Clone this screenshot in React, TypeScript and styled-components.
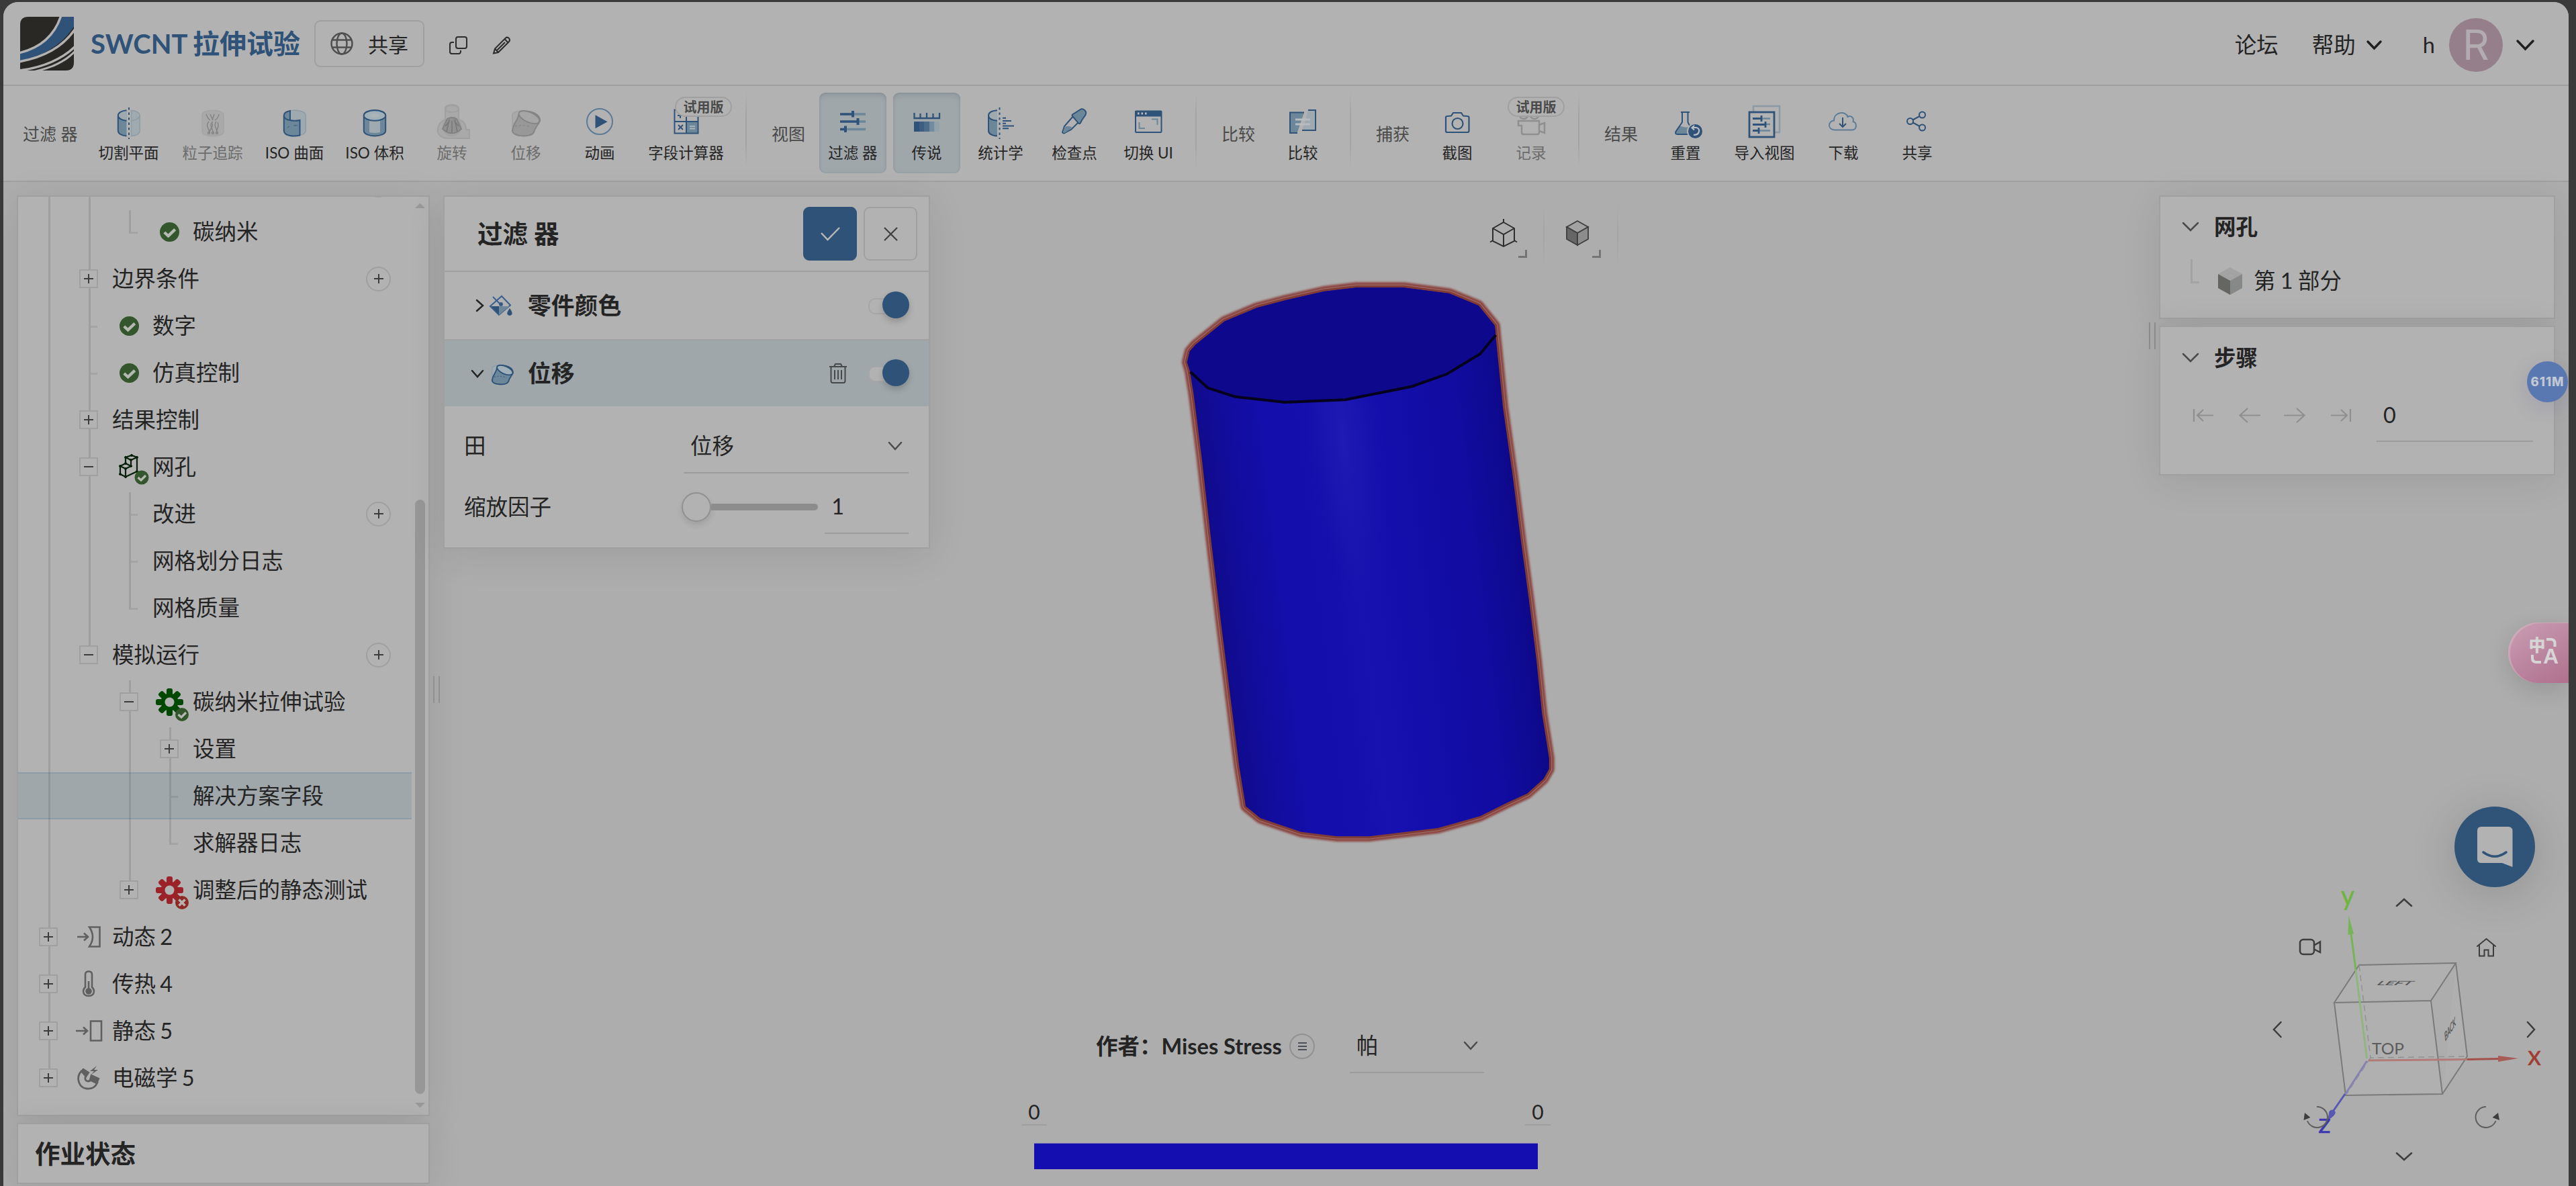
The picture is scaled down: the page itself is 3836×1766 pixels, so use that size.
import React from 'react';
import styled, { createGlobalStyle, css } from 'styled-components';

const c = {
  frame: '#3a3a3a',
  surface: '#b2b2b2',
  canvas: '#adadad',
  line: '#a0a0a0',
  text: '#242424',
  muted: '#4a4a4a',
  disabled: '#6c6c6c',
  blue: '#2f5278',
  mid: '#6c8799',
  light: '#9faab0',
  active: '#9fa7aa',
  green: '#34562c',
};

const Global = createGlobalStyle`
  * { box-sizing: border-box; }
  body {
    margin: 0;
    background: ${c.frame};
    color: ${c.text};
    font-family: Lato, "Noto Sans CJK SC", sans-serif;
    font-size: 32.5px;
    overflow: hidden;
  }
  svg { display: block; overflow: visible; flex: none; }
`;

const Window = styled.div`
  width: 3820px;
  height: 1763px;
  margin: 3px 0 0 5px;
  background: ${c.canvas};
  border-radius: 22px 22px 0 0;
  overflow: hidden;
  display: flex;
  flex-direction: column;
  position: relative;
`;

/* ---------- header ---------- */
const Header = styled.header`
  height: 125px;
  flex: none;
  display: flex;
  align-items: center;
  padding: 0 52px 0 25px;
  background: ${c.surface};
  border-bottom: 2px solid ${c.line};
`;
const Title = styled.h1`
  margin: 0 23px 0 25px;
  width: 310px;
  white-space: nowrap;
  font-size: 40px;
  line-height: 60px;
  font-weight: 700;
  word-spacing: -1px;
  color: ${c.blue};
`;
const ShareButton = styled.button`
  width: 164px;
  height: 70px;
  margin-top: 1px;
  padding: 0 0 0 22px;
  display: flex;
  align-items: center;
  gap: 22px;
  background: none;
  border: 2px solid ${c.line};
  border-radius: 9px;
  font: inherit;
  font-size: 30px;
  color: ${c.text};
`;
const HeaderIcons = styled.div`
  display: flex;
  gap: 38px;
  margin: 6px 0 0 37px;
`;
const UserNav = styled.nav`
  margin-left: auto;
  display: flex;
  align-items: center;
  line-height: 50px;
  padding-top: 4px;
`;
const NavText = styled.span<{ $gap: number }>`
  margin-right: ${p => p.$gap}px;
`;
const UserName = styled.span`
  margin-left: 62px;
`;
const Avatar = styled.div`
  width: 80px;
  height: 80px;
  margin: 0 21px;
  border-radius: 50%;
  background: #957f8b;
  color: #b2abaf;
  font: 62px/80px Inter, "Liberation Sans", sans-serif;
  text-align: center;
`;

/* ---------- toolbar ---------- */
const Toolbar = styled.div`
  height: 143px;
  flex: none;
  display: flex;
  padding-top: 10px;
  background: ${c.surface};
  border-bottom: 2px solid ${c.line};
`;
const Group = styled.section`
  display: flex;
  margin-right: 20px;
`;
const Tools = styled.div`
  display: flex;
  gap: 10px;
`;
const Separator = styled.div`
  width: 2px;
  height: 110px;
  background: linear-gradient(transparent, #a3a3a3 30%, #a3a3a3 70%, transparent);
`;
const GroupLabel = styled.div<{ $w: number; $pad: number }>`
  width: ${p => p.$w}px;
  padding-left: ${p => p.$pad}px;
  font-size: 25px;
  line-height: 123px;
  white-space: nowrap;
  color: ${c.muted};
`;
const ToolItem = styled.div<{ $w: number; $active?: boolean; $off?: boolean }>`
  width: ${p => p.$w}px;
  height: 120px;
  padding-top: 18px;
  display: flex;
  flex-direction: column;
  align-items: center;
  position: relative;
  border-radius: 9px;
  font-size: 22.5px;
  line-height: 44px;
  white-space: nowrap;
  color: ${p => (p.$off ? c.disabled : c.text)};
  ${p => p.$active && css`
    background: ${c.active};
    box-shadow: inset 0 6px 10px -3px rgba(0, 0, 0, 0.12), inset 0 0 0 2px rgba(140, 155, 163, 0.35);
  `}
`;
const Badge = styled.span<{ $x: number }>`
  position: absolute;
  left: ${p => p.$x}px;
  top: 6px;
  width: 85px;
  height: 30px;
  border: 2px solid ${c.line};
  border-radius: 15px;
  background: ${c.surface};
  color: ${c.muted};
  font-size: 20px;
  font-weight: 700;
  line-height: 26px;
  text-align: center;
`;

/* ---------- workspace ---------- */
const Workspace = styled.main`
  flex: 1;
  display: flex;
  position: relative;
  padding: 20px 20px 0 20px;
`;
const panel = css`
  background: ${c.surface};
  border: 2px solid ${c.line};
  box-shadow: 0 8px 55px rgba(0, 0, 0, 0.09);
`;
const SideColumn = styled.aside`
  width: 615px;
  display: flex;
  flex-direction: column;
  gap: 10px;
`;
const TreePanel = styled.div`
  ${panel}
  height: 1371px;
  display: flex;
  justify-content: space-between;
  overflow: hidden;
`;
const TreeList = styled.div`
  width: 586px;
`;
const Row = styled.div<{ $selected?: boolean; $clipped?: boolean }>`
  height: 70px;
  margin-top: ${p => (p.$clipped ? '-53px' : '0')};
  padding-left: 15px;
  display: flex;
  align-items: center;
  white-space: nowrap;
  ${p => p.$selected && css`
    background: ${c.active};
    box-shadow: inset 0 2px #8f9ca6, inset 0 -2px #8f9ca6;
  `}
`;
const Cell = styled.div`
  width: 60px;
  height: 70px;
  flex: none;
  position: relative;
  display: flex;
  align-items: center;
  justify-content: center;
`;
const Stem = styled.i<{ $from: number; $to: number }>`
  position: absolute;
  left: 30px;
  top: ${p => p.$from}px;
  width: 3px;
  height: ${p => p.$to - p.$from}px;
  background: rgba(0, 0, 0, 0.1);
`;
const Tick = styled.i`
  position: absolute;
  left: 33px;
  top: 35px;
  width: 10px;
  height: 3px;
  background: rgba(0, 0, 0, 0.08);
`;
const Expander = styled.span<{ $open?: boolean }>`
  width: 28px;
  height: 28px;
  position: relative;
  border: 2px solid ${c.line};
  background: ${c.surface};
  &::before, &::after {
    content: '';
    position: absolute;
    left: 5px;
    top: 11px;
    width: 14px;
    height: 2px;
    background: #3c3c3c;
  }
  &::after {
    display: ${p => (p.$open ? 'none' : 'block')};
    transform: rotate(90deg);
  }
`;
const RowText = styled.span`
  padding-left: 5px;
  line-height: 70px;
  word-spacing: -2px;
`;
const AddButton = styled.span`
  width: 37px;
  height: 37px;
  margin: 0 31px 0 auto;
  border: 2px solid ${c.line};
  border-radius: 50%;
  display: flex;
  align-items: center;
  justify-content: center;
`;
const ScrollTrack = styled.div`
  width: 15px;
  margin-right: 5px;
  padding: 10px 0;
  display: flex;
  flex-direction: column;
`;
const ScrollArrow = styled.i<{ $down?: boolean }>`
  border: 7.5px solid transparent;
  border-top-width: ${p => (p.$down ? 7 : 0)}px;
  border-bottom-width: ${p => (p.$down ? 0 : 7)}px;
  border-${p => (p.$down ? 'top' : 'bottom')}-color: #999;
`;
const ScrollThumb = styled.div`
  height: 885px;
  margin: 434px 0 13px;
  border-radius: 8px;
  background: #979797;
`;
const JobPanel = styled.div`
  ${panel}
  height: 91px;
  padding-left: 25px;
  font-size: 37.5px;
  font-weight: 700;
  line-height: 88px;
`;
const Handle = styled.div<{ $top: number }>`
  width: 10px;
  height: 40px;
  margin: ${p => p.$top}px 5px 0;
  border: solid #909090;
  border-width: 0 2px;
`;

/* ---------- filter panel ---------- */
const FilterPanel = styled.section`
  ${panel}
  width: 725px;
  height: 526px;
  display: flex;
  flex-direction: column;
`;
const FilterHeader = styled.div`
  height: 112px;
  display: flex;
  align-items: center;
  gap: 10px;
  padding: 0 17px 0 49px;
  border-bottom: 2px solid ${c.line};
`;
const FilterTitle = styled.h2`
  margin: 0 auto 0 0;
  font-size: 37.5px;
  line-height: 50px;
`;
const SquareButton = styled.button<{ $primary?: boolean }>`
  width: 80px;
  height: 80px;
  padding: 0;
  display: flex;
  align-items: center;
  justify-content: center;
  border-radius: 9px;
  border: 2px solid ${p => (p.$primary ? c.blue : c.line)};
  background: ${p => (p.$primary ? c.blue : 'none')};
`;
const FilterRow = styled.div<{ $active?: boolean }>`
  height: ${p => (p.$active ? 98 : 102)}px;
  display: flex;
  align-items: center;
  padding: 0 29px 0 ${p => (p.$active ? 40 : 47)}px;
  background: ${p => (p.$active ? c.active : 'none')};
  border-bottom: ${p => (p.$active ? 'none' : `2px solid ${c.line}`)};
`;
const FilterIcon = styled.span`
  width: 38px;
  margin-left: 9px;
`;
const FilterName = styled.h3`
  margin: -1px auto 0 19px;
  font-size: 34.8px;
  line-height: 50px;
`;
const Toggle = styled.div`
  width: 61px;
  height: 40px;
  margin: -2px 0 0 32px;
  display: flex;
  align-items: center;
  justify-content: flex-end;
  position: relative;
  &::before {
    content: '';
    position: absolute;
    left: 0;
    top: 10px;
    width: 50px;
    height: 20px;
    border-radius: 10px;
    border: 2px solid #a6a6a6;
    background: ${c.surface};
  }
  &::after {
    content: '';
    position: relative;
    width: 40px;
    height: 40px;
    border-radius: 50%;
    background: ${c.blue};
    box-shadow: 0 5px 10px rgba(0, 0, 0, 0.18);
  }
`;
const Field = styled.label<{ $h: number }>`
  height: ${p => p.$h}px;
  display: flex;
  align-items: center;
  padding: 0 30px 0 29px;
  line-height: 50px;
`;
const FieldName = styled.span`
  width: 327px;
  margin-top: -1px;
`;
const Underlined = styled.span<{ $w: number; $h: number }>`
  width: ${p => p.$w}px;
  height: ${p => p.$h}px;
  padding: 0 10px;
  display: flex;
  align-items: center;
  justify-content: space-between;
  border-bottom: 2px solid #9c9c9c;
`;
const Slider = styled.span`
  width: 203px;
  height: 40px;
  margin: -1px 10px 0 -2px;
  display: flex;
  align-items: center;
  &::before {
    content: '';
    width: 40px;
    height: 40px;
    border-radius: 50%;
    border: 2px solid #909090;
    box-shadow: 0 5px 8px rgba(0, 0, 0, 0.1);
  }
  &::after {
    content: '';
    flex: 1;
    height: 10px;
    border-radius: 0 5px 5px 0;
    background: #8d8d8d;
  }
`;

/* ---------- viewport ---------- */
const Scene = styled.svg`
  position: absolute;
  left: 1695px;
  top: 29px;
`;
const Viewport = styled.section`
  flex: 1;
  position: relative;
  display: flex;
  flex-direction: column;
`;
const ViewTools = styled.div`
  margin: 14px 0 0 805px;
  display: flex;
`;
const ViewTool = styled.div`
  width: 110px;
  height: 90px;
  display: flex;
  align-items: center;
  justify-content: center;
  position: relative;
  padding: 0 11px 6px 0;
  border-right: 2px solid transparent;
  border-image: linear-gradient(transparent, #a3a3a3 50%, transparent) 1;
  &::after {
    content: '';
    position: absolute;
    right: 24px;
    bottom: 11px;
    width: 10px;
    height: 9px;
    border: solid #757575;
    border-width: 0 3px 3px 0;
  }
`;
const Legend = styled.div`
  width: 750px;
  margin: auto 0 25px 155px;
`;
const LegendHead = styled.div`
  display: flex;
  align-items: center;
  height: 80px;
  padding-left: 92px;
  line-height: 48px;
`;
const LegendName = styled.strong`
  width: 288px;
  margin-top: -1px;
  white-space: nowrap;
`;
const MenuDot = styled.span`
  width: 38px;
  height: 38px;
  margin: -1px 52px 0 0;
  border: 2px solid #919191;
  border-radius: 50%;
  display: flex;
  flex-direction: column;
  align-items: center;
  justify-content: center;
  gap: 3px;
  & i {
    width: 13px;
    height: 2px;
    background: #4b5058;
  }
`;
const Range = styled.div`
  height: 104px;
  display: flex;
  justify-content: space-between;
  align-items: flex-start;
  padding-top: 37px;
  margin: 0 -19px;
`;
const Bound = styled.span`
  width: 38px;
  height: 41px;
  border-bottom: 2px solid #9f9f9f;
  font-size: 30px;
  line-height: 41px;
  text-align: center;
`;
const ColorBar = styled.div`
  height: 39px;
  background: #140eb0;
  border-top: 1px solid #6a67ae;
`;

/* ---------- right side ---------- */
const RightColumn = styled.aside`
  width: 590px;
  display: flex;
  flex-direction: column;
  gap: 10px;
`;
const InfoPanel = styled.section<{ $h: number }>`
  ${panel}
  height: ${p => p.$h}px;
  padding-left: 33px;
`;
const InfoTitle = styled.h4<{ $h: number }>`
  height: ${p => p.$h}px;
  margin: 0;
  display: flex;
  align-items: center;
  gap: 23px;
  font-size: 32.5px;
  line-height: 48px;
`;
const PartRow = styled.div`
  display: flex;
  align-items: center;
  height: 72px;
  line-height: 50px;
`;
const PartElbow = styled.i`
  width: 13px;
  height: 36px;
  margin: -28px 28px 0 12px;
  border: solid #a3a3a3;
  border-width: 0 0 3px 3px;
`;
const PartName = styled.span`
  margin-left: 17px;
  word-spacing: -1px;
`;
const Steps = styled.div`
  display: flex;
  align-items: center;
  padding-left: 16px;
  height: 80px;
`;
const StepArrows = styled.div`
  display: flex;
  gap: 37px;
  margin-right: 38px;
`;

const Orientation = styled.svg`
  position: absolute;
  left: 3335px;
  top: 909px;
  font-family: Lato, sans-serif;
`;
const Chat = styled.div`
  position: absolute;
  left: 3650px;
  top: 930px;
  width: 120px;
  height: 120px;
  border-radius: 50%;
  background: #305478;
  box-shadow: 0 10px 70px rgba(0, 0, 0, 0.16);
`;
const Memory = styled.div`
  position: absolute;
  left: 3758px;
  top: 267px;
  width: 61px;
  height: 61px;
  border-radius: 50%;
  background: #5977b0;
  color: #c2c8d4;
  box-shadow: 0 8px 30px rgba(90, 90, 150, 0.2);
  font: 800 18.5px/61px Inter, sans-serif;
  letter-spacing: 1px;
  text-align: center;
`;
const Translate = styled.div`
  position: absolute;
  right: 0;
  top: 656px;
  width: 90px;
  height: 90px;
  border-radius: 45px 0 0 45px;
  padding: 21px 0 0 32px;
  background: linear-gradient(150deg, #c99fb3, #b0708e);
  box-shadow: inset 3px 1px 1px rgba(215, 190, 200, 0.5), 0 10px 35px rgba(0, 0, 0, 0.13);
`;

/* ---------- icons ---------- */
const B = c.blue;
const M = c.mid;
const L = c.light;

const Icon = ({ size = 50, children }: { size?: number; children: React.ReactNode }) => (
  <svg width={size} height={size} viewBox="0 0 50 50" fill="none" stroke={B} strokeWidth="2">
    {children}
  </svg>
);

const toolIcons: Record<string, React.ReactNode> = {
  cut: (
    <>
      <path d="M21.500 8.300C14 9 8.800 12 8.800 16V38.500C8.800 43 14 46 21.500 46.500Z" fill={M} stroke="none" />
      <path d="M21.500 8.300C5 9.500 4 21 21.500 23.800Z" fill={L} stroke="none" />
      <path d="M21.500 8.300C14 9 8.800 12 8.800 16V38.500C8.800 43 14 46 21.500 46.500M8.800 16C8.800 20 14 23 21.500 23.800" />
      <path d="M28.500 8.300C36 9 41.200 12 41.200 16V38.500C41.200 43 36 46 28.500 46.500ZM41.200 16C41.200 20 36 23 28.500 23.800" fill={L} stroke="#8d9ba5" strokeWidth="1.500" />
      <path d="M25 4V51" strokeDasharray="3.500 4" />
    </>
  ),
  particle: (
    <g stroke="#858585" strokeWidth="1.500">
      <path d="M9 15C9 6 41 6 41 15V40C41 49 9 49 9 40Z" fill="#a9a9a9" stroke="#a4a4a4" />
      <path d="M15 14Q17 20 21 23M21 14L25 23M27 14L24 23M34 14Q33 20 28 23M19 25C13 32 20 35 20 42M25 25C18 32 26 35 25 42M30 25C25 32 32 35 31 42M23 26C28 33 19 36 20 42M32 26C36 33 29 36 31 42" />
      <circle cx="19" cy="42" r="1.500" /><circle cx="25" cy="42" r="1.500" /><circle cx="31" cy="42" r="1.500" />
    </g>
  ),
  isoSurface: (
    <>
      <path d="M8.800 16C8.800 5.500 41.200 5.500 41.200 16V38.500C41.200 49 8.800 49 8.800 38.500Z" fill={L} stroke="#8d9ba5" strokeWidth="1.500" />
      <path d="M18 9C12 10 8.800 13 8.800 16V38.500C8.800 46 22 48 32.500 45.500V23C28 24 22 24 18 23Z" fill={M} />
      <path d="M8.800 16C8.800 20 13 22.500 18 23" />
      <path d="M14 34L17 32M23 31H29" stroke={B} strokeWidth="1.500" opacity=".5" />
    </>
  ),
  isoVolume: (
    <>
      <path d="M8.800 16C8.800 5.500 41.200 5.500 41.200 16V38.500C41.200 49 8.800 49 8.800 38.500Z" fill={M} />
      <path d="M17 20H33V41Q25 43 17 41Z" fill={L} stroke="none" />
      <ellipse cx="25" cy="16" rx="16.200" ry="7.800" fill="#a0b0b9" />
      <ellipse cx="25" cy="16" rx="7.500" ry="3" fill="#aab4b9" stroke="none" />
    </>
  ),
  turbine: (
    <g stroke="#a0a0a0" strokeWidth="2">
      <path d="M15 6V22C0 28-2 50 20 50H51V37H46C46 28 42 24 35 22V6C35-2 15-2 15 6Z" fill="#a9a9a9" />
      <ellipse cx="25" cy="6" rx="10" ry="5" />
      <circle cx="25" cy="33" r="13" />
      <path d="M18 21L11 36Q25 49 39 36L32 21Q25 17 18 21Z" fill="#929292" stroke="#838383" />
      <path d="M21 22L17 40M25 24V42M29 22L33 40M15 32L21 25M35 32L29 25" stroke="#777" strokeWidth="1.500" />
    </g>
  ),
  shiftOff: (
    <>
      <path d="M5 15C5 7 37 7 37 15V32H5Z" fill="#a9a9a9" stroke="#a3a3a3" />
      <path d="M14 16C16 5 47 9 46 24C43 31 39 33 37 41C33 49 6 48 5 39C6 27 13 24 14 16Z" fill="#989898" stroke="#858585" />
      <ellipse cx="30" cy="18.500" rx="16.500" ry="7.500" transform="rotate(24 30 18.500)" fill="#a6a6a6" stroke="#858585" />
      <path d="M9 32Q20 29 33 33" stroke="#888" strokeWidth="1.500" strokeDasharray="3 3" />
    </>
  ),
  shift: (
    <>
      <path d="M5 15C5 7 37 7 37 15V32H5Z" fill="#9fadb4" stroke="#8fa0ab" />
      <path d="M14 16C16 5 47 9 46 24C43 31 39 33 37 41C33 49 6 48 5 39C6 27 13 24 14 16Z" fill={M} strokeWidth="2.500" />
      <ellipse cx="30" cy="18.500" rx="16.500" ry="7.500" transform="rotate(24 30 18.500)" fill="#9fb0ba" strokeWidth="2.500" />
      <path d="M9 32Q20 29 33 33" strokeWidth="1.500" strokeDasharray="3 3" opacity=".6" />
    </>
  ),
  play: (
    <>
      <circle cx="25" cy="25" r="19" stroke="#5c7b97" />
      <path d="M19.500 17V33.500L34.500 25.200Z" fill={B} />
    </>
  ),
  calc: (
    <>
      <path d="M25 25H42.500V42.500H25Z" fill={M} stroke="none" />
      <path d="M7.500 7.500H42.500V42.500H7.500ZM25 8V42.500M8 25H42.500M16 12V20M12 16H20M13 30L20 37M20 30L13 37" />
      <path d="M30 32H38M30 35.500H38" stroke="#a8b3ba" />
    </>
  ),
  filters: (
    <>
      <path d="M25 14H44M32 25H44M14 36.500H44" stroke={M} strokeWidth="3.500" />
      <path d="M6 14H25M6 25H32M6 36.500H14" strokeWidth="3.500" />
      <path d="M25 9V18.500M32.500 20V30M14 31.500V41" strokeWidth="4" />
    </>
  ),
  legend: (
    <>
      <path d="M6.500 12V20H44V12M15.500 13V20M25 12V20M34.500 13V20" strokeWidth="2.300" />
      <g stroke="none">
        <rect x="6" y="25" width="8" height="15" fill="#2f5278" />
        <rect x="14" y="25" width="7" height="15" fill="#3d5e80" />
        <rect x="21" y="25" width="8" height="15" fill="#4e6c8a" />
        <rect x="29" y="25" width="7.500" height="15" fill="#718c9e" />
        <rect x="36.500" y="25" width="7.500" height="15" fill="#93a2aa" />
      </g>
    </>
  ),
  stats: (
    <>
      <path d="M20 8.300C12 9 7 12 7 16V38.500C7 43 12 46 20 46.500Z" fill={M} stroke="none" />
      <path d="M20 8.300C4 9.500 3 21 20 23.800Z" fill={L} stroke="none" />
      <path d="M20 8.300C12 9 7 12 7 16V38.500C7 43 12 46 20 46.500M7 16C7 20 12 23 20 23.800" />
      <path d="M23.500 4V51" strokeDasharray="3.500 4" />
      <path d="M28 19.700H33M28 24H41M28 27.700H33M28 31.500H45M28 35.200H37" stroke={B} />
    </>
  ),
  dropper: (
    <>
      <path d="M24 16L10 32L7 41Q9 44 12 41L20 37L33 24" />
      <path d="M11 33Q16 30 22 34L12 41Q9 43 8 40Z" fill={M} stroke="none" />
      <path d="M23 14L26 12L33 7.500C38 4 44 10 41.500 15L36 23L34 27Q32 30 29 25L23 18Q20 15 23 14Z" fill={M} />
    </>
  ),
  layout: (
    <>
      <rect x="6" y="9.500" width="38.500" height="31.500" rx="1" />
      <path d="M6 10H44V16.500H6Z" fill={B} />
      <path d="M9 13H11.500M14.500 13H17M20 13H22.500" stroke="#bbb" strokeWidth="3" />
      <path d="M30 21.500H38.500V30M11.500 26V35H20" stroke={M} />
    </>
  ),
  compare: (
    <>
      <path d="M27 11.500H6V42H16.500Z" fill={M} stroke="none" />
      <path d="M27 11.500H6V42H17" />
      <path d="M33 8H44V38H24Z" fill={L} stroke="none" />
      <path d="M33 8H44V38H24" />
      <path d="M31 7L19 43" stroke={c.surface} strokeWidth="3" />
      <path d="M14 22H36M14 29H36" stroke="#b7bcbf" strokeWidth="3" />
    </>
  ),
  camera: (
    <>
      <path d="M8 19Q8 17 10 17L16 16.500L19 12H31L34 16.500L40 17Q42.500 17 42.500 19V39Q42.500 41 40 41H10Q8 41 8 39Z" strokeWidth="2.200" />
      <circle cx="25.500" cy="28" r="8" strokeWidth="2.200" />
    </>
  ),
  record: (
    <g stroke="#8f8f8f" strokeWidth="2.500">
      <circle cx="14" cy="14" r="7" /><circle cx="30" cy="14" r="7" />
      <path d="M6 24H37V41Q37 44 34 44H14Q11 44 11 41V31H6ZM37 30L45 27V42L37 39" />
    </g>
  ),
  reset: (
    <>
      <path d="M14 33Q18 31 22 33Q27 35 32 32L36 40Q38 44 33 44H13Q8 44 10 39Z" fill={M} stroke="none" />
      <path d="M18 11H31M20 11V26L10.500 40Q9 44 13 44H34Q37 43 35.500 40L28.500 26V11" />
      <circle cx="39.500" cy="39.500" r="11.500" fill={B} stroke={c.surface} strokeWidth="2" />
      <path d="M35 34H41Q46 35 45 40Q44 45 37 45M38 31L34.500 34.200L38 37.500" stroke="#bbc0c5" strokeWidth="2.200" />
    </>
  ),
  importView: (
    <>
      <path d="M8 10V2H47V41H40" stroke="#8a9ba6" strokeWidth="2.500" />
      <rect x="2" y="11" width="37" height="37" strokeWidth="2.800" />
      <path d="M20 20.500H33M26 29H33M16 38.500H33" stroke={M} strokeWidth="2.500" />
      <path d="M7 20.500H20M7 29.500H26M7 38.500H16M20 16V25M26 25V34M16 34V43" strokeWidth="2.800" />
    </>
  ),
  download: (
    <>
      <path d="M12 37.500C1 37 2 24 11 23.500C11 10 29 9 31.500 18C37 15 41 20 39.500 25C46 27 45 37.500 38 37.500Z" stroke="#5c7b97" />
      <path d="M24 19V33M19 28L24 33L29 28" />
    </>
  ),
  share: (
    <>
      <circle cx="14.500" cy="24.500" r="4.500" /><circle cx="32.500" cy="15" r="4.500" /><circle cx="32.500" cy="34" r="4.500" />
      <path d="M18.500 22.500L28.500 17M18.500 26.500L28.500 32" />
    </>
  ),
};

const Chevron = ({ w, h, dir = 'down', color = '#4a4a4a', stroke = 3 }: { w: number; h: number; dir?: string; color?: string; stroke?: number }) => {
  const d: Record<string, string> = {
    down: `M1 1L${w / 2} ${h - 1}L${w - 1} 1`,
    right: `M1 1L${w - 1} ${h / 2}L1 ${h - 1}`,
  };
  return (
    <svg width={w} height={h} fill="none" stroke={color} strokeWidth={stroke} strokeLinecap="round">
      <path d={d[dir]} />
    </svg>
  );
};

const Logo = () => (
  <svg width="80" height="80" viewBox="0 0 80 80">
    <defs><clipPath id="logo"><path d="M12 0H80V68Q80 80 68 80H0V12Q0 0 12 0Z" /></clipPath></defs>
    <g clipPath="url(#logo)">
      <rect width="80" height="80" fill="#2a2824" />
      <path d="M62 -2C54 26 34 46 -2 55V66C44 56 68 36 84 8V-2Z" fill={B} />
      <g fill="none" stroke={c.surface} strokeWidth="3.500">
        <path d="M61 -2C52 26 32 46 -2 54" />
        <path d="M-2 67C38 60 66 42 82 18" />
        <path d="M-2 80C34 76 64 62 82 44" />
      </g>
      <path d="M16 81C44 76 66 66 82 49V53C66 70 44 78 24 82Z" fill={c.surface} />
    </g>
  </svg>
);

const CheckDisc = ({ size = 29 }: { size?: number }) => (
  <svg width={size} height={size} viewBox="0 0 30 30">
    <circle cx="15" cy="15" r="15" fill={c.green} />
    <path d="M7 15.500L13 21L23.500 11" fill="none" stroke="#b4b9b2" strokeWidth="4.500" />
  </svg>
);

const Gear = ({ color, failed }: { color: string; failed?: boolean }) => (
  <svg width="41" height="41" viewBox="0 0 41 41">
    {[0, 45, 90, 135].map(a => (
      <rect key={a} x="16" y="0" width="9" height="41" rx="3" fill={color} transform={`rotate(${a} 20.5 20.5)`} />
    ))}
    <circle cx="20.500" cy="20.500" r="13" fill={color} />
    <circle cx="20.500" cy="20.500" r="7" fill={c.surface} />
    <circle cx="39" cy="39" r="10" fill={failed ? '#8d2a25' : c.green} />
    {failed
      ? <path d="M34.500 34.500L43.500 43.500M43.500 34.500L34.500 43.500" stroke="#b8b2b0" strokeWidth="3.500" />
      : <path d="M33.500 39L38 43L45 36" fill="none" stroke="#b4b9b2" strokeWidth="3.200" />}
  </svg>
);

const treeIcons: Record<string, React.ReactNode> = {
  check: <CheckDisc />,
  mesh: (
    <svg width="30" height="36" viewBox="0 0 30 36" fill="none" stroke="#08200a" strokeWidth="2.200">
      <path d="M2 17L10 13L18 17L10 21ZM2 17V29L10 33V21M10 33L27 25V4L19 1L10 4V13M10 4L18 8L27 4M18 8V17" />
      <g fill="#08200a" strokeWidth="1">
        {[[2, 17], [10, 13], [18, 17], [10, 21], [2, 29], [10, 33], [27, 25], [27, 4], [19, 1], [10, 4], [18, 8]].map(([x, y]) => (
          <circle key={`${x}-${y}`} cx={x} cy={y} r="1.500" />
        ))}
      </g>
      <circle cx="34" cy="34" r="10.500" fill={c.green} stroke="none" />
      <path d="M28.500 34L33 38L40 31" stroke="#b4b9b2" strokeWidth="3.200" />
    </svg>
  ),
  gearOk: <Gear color="#014801" />,
  gearFail: <Gear color="#9b2228" failed />,
  dynamic: (
    <svg width="34" height="32" viewBox="0 0 34 32" fill="none" stroke="#606060" strokeWidth="2.600">
      <path d="M0 16H15M10 10.500L16 16L10 21.500M18 1.500H33.500V30.500H18Q28 16 18 1.500Z" />
    </svg>
  ),
  thermal: (
    <svg width="18" height="40" viewBox="0 0 18 40" fill="none" stroke="#606060" strokeWidth="2.600">
      <path d="M4 25V6Q4 1.500 9 1.500Q14 1.500 14 6V25Q17 27.500 17 31Q16.500 38 9 38Q1.500 38 1 31Q1 27.500 4 25Z" />
      <path d="M9 16V31" /><circle cx="9" cy="31" r="3.500" fill="#606060" />
    </svg>
  ),
  fixed: (
    <svg width="38" height="32" viewBox="0 0 38 32" fill="none" stroke="#606060" strokeWidth="2.600">
      <path d="M0 16H16M11 10.500L17 16L11 21.500M22 1.500H38V30.500H22Z" />
    </svg>
  ),
  magnet: (
    <svg width="32" height="36" viewBox="0 0 32 36" fill="none" stroke="#606060" strokeWidth="2.400">
      <path d="M5 8C-4 18 2 33 13 34C22 35 27 30 29 25L20 20C18 24 12 24 11 20C10 17 12 15 14 12" strokeWidth="2.800" />
      <path d="M5 8L8 5L16 10L12 16ZM20 14L31 19L28 26L18 21Z" fill="#606060" />
      <path d="M28 0L18 8H24L20 13L30 6H24Z" fill="#606060" stroke="none" />
    </svg>
  ),
};

type TreeRow = { cells: string[]; text: string; add?: boolean; selected?: boolean };

const rows: TreeRow[] = [
  { cells: ['line', 'line', 'elbowTop', 'check'], text: '碳纳米' },
  { cells: ['line', 'plus'], text: '边界条件', add: true },
  { cells: ['line', 'tick', 'check'], text: '数字' },
  { cells: ['line', 'tick', 'check'], text: '仿真控制' },
  { cells: ['line', 'plus'], text: '结果控制' },
  { cells: ['line', 'minus', 'mesh'], text: '网孔' },
  { cells: ['line', 'line', 'tickTop'], text: '改进', add: true },
  { cells: ['line', 'line', 'tick'], text: '网格划分日志' },
  { cells: ['line', 'line', 'elbow'], text: '网格质量' },
  { cells: ['line', 'minusEnd'], text: '模拟运行', add: true },
  { cells: ['line', 'blank', 'minusTop', 'gearOk'], text: '碳纳米拉伸试验' },
  { cells: ['line', 'blank', 'line', 'plusTop'], text: '设置' },
  { cells: ['line', 'blank', 'line', 'tick'], text: '解决方案字段', selected: true },
  { cells: ['line', 'blank', 'line', 'elbow'], text: '求解器日志' },
  { cells: ['line', 'blank', 'plusEnd', 'gearFail'], text: '调整后的静态测试' },
  { cells: ['plus', 'dynamic'], text: '动态 2' },
  { cells: ['plus', 'thermal'], text: '传热 4' },
  { cells: ['plus', 'fixed'], text: '静态 5' },
  { cells: ['plusEnd', 'magnet'], text: '电磁学 5' },
];

const TreeCell = ({ part }: { part: string }) => {
  if (part === 'blank') return <Cell />;
  if (part in treeIcons) return <Cell>{treeIcons[part]}</Cell>;
  const from = part.endsWith('Top') ? 3 : 0;
  const to = part.endsWith('End') || part.startsWith('elbow') ? 38 : 70;
  return (
    <Cell>
      <Stem $from={from} $to={to} />
      {(part.startsWith('tick') || part.startsWith('elbow')) && <Tick />}
      {part.startsWith('plus') && <Expander />}
      {part.startsWith('minus') && <Expander $open />}
    </Cell>
  );
};

const Add = () => (
  <AddButton>
    <svg width="14" height="14" stroke="#3c3c3c" strokeWidth="2"><path d="M7 0V14M0 7H14" /></svg>
  </AddButton>
);

type Tool = { icon: string; text: string; w?: number; off?: boolean; active?: boolean; badge?: number };
const groups: { label: string; tools: Tool[] }[] = [
  {
    label: '过滤 器',
    tools: [
      { icon: 'cut', text: '切割平面', w: 115 },
      { icon: 'particle', text: '粒子追踪', w: 115, off: true },
      { icon: 'isoSurface', text: 'ISO 曲面', w: 109 },
      { icon: 'isoVolume', text: 'ISO 体积', w: 110 },
      { icon: 'turbine', text: '旋转', off: true },
      { icon: 'shiftOff', text: '位移', off: true },
      { icon: 'play', text: '动画' },
      { icon: 'calc', text: '字段计算器', w: 137, badge: 52 },
    ],
  },
  {
    label: '视图',
    tools: [
      { icon: 'filters', text: '过滤 器', active: true },
      { icon: 'legend', text: '传说', active: true },
      { icon: 'stats', text: '统计学' },
      { icon: 'dropper', text: '检查点' },
      { icon: 'layout', text: '切换 UI' },
    ],
  },
  { label: '比较', tools: [{ icon: 'compare', text: '比较' }] },
  {
    label: '捕获',
    tools: [
      { icon: 'camera', text: '截图' },
      { icon: 'record', text: '记录', off: true, badge: 15 },
    ],
  },
  {
    label: '结果',
    tools: [
      { icon: 'reset', text: '重置' },
      { icon: 'importView', text: '导入视图', w: 115 },
      { icon: 'download', text: '下载' },
      { icon: 'share', text: '共享' },
    ],
  },
];

const outline = '140,375 148,350 165,335 255,280 355,248 445,230 560,210 660,201 805,201 945,215 1035,243 1085,290 1088,315 1110,480 1140,640 1165,790 1190,930 1213,1070 1230,1195 1252,1300 1252,1325 1235,1348 1185,1382 1120,1405 1040,1435 910,1463 700,1482 600,1482 490,1472 365,1440 320,1412 300,1320 270,1140 245,990 215,800 185,600 160,450 148,395';
const lid = '140,375 148,350 165,335 255,280 355,248 445,230 560,210 660,201 805,201 945,215 1035,243 1085,290 1088,312 1040,356 938,403 830,432 625,463 440,469 288,456 203,435 150,398';

const Cylinder = () => (
  <Scene width="760" height="1000" viewBox="0 0 1568 1568" preserveAspectRatio="none">
    <defs>
      <linearGradient id="body" gradientUnits="userSpaceOnUse" x1="225" y1="900" x2="1166" y2="751">
        <stop offset="0" stopColor="#100b8c" />
        <stop offset=".08" stopColor="#120c9a" />
        <stop offset=".22" stopColor="#140eac" />
        <stop offset=".38" stopColor="#150fad" />
        <stop offset=".46" stopColor="#1812b0" />
        <stop offset=".6" stopColor="#140eac" />
        <stop offset=".82" stopColor="#120ca2" />
        <stop offset=".95" stopColor="#0f0a92" />
        <stop offset="1" stopColor="#0e0888" />
      </linearGradient>
      <radialGradient id="shine" gradientUnits="userSpaceOnUse" cx="0" cy="0" r="1" gradientTransform="translate(620 560) rotate(-8) scale(130 420)">
        <stop offset="0" stopColor="#2a24b8" stopOpacity=".5" />
        <stop offset="1" stopColor="#1a14b0" stopOpacity="0" />
      </radialGradient>
      <filter id="soft"><feGaussianBlur stdDeviation="3.500 2.700" /></filter>
    </defs>
    <g fill="none" strokeLinejoin="round">
      <polygon points={outline} stroke="#8a4440" strokeWidth="16" vectorEffect="non-scaling-stroke" filter="url(#soft)" />
      <polygon points={outline} stroke="#a06a64" strokeWidth="9" vectorEffect="non-scaling-stroke" />
      <polygon points={outline} stroke="#803c36" strokeWidth="6.500" vectorEffect="non-scaling-stroke" />
    </g>
    <polygon points={outline} fill="url(#body)" />
    <polygon points={outline} fill="url(#shine)" />
    <polygon points={lid} fill="#0e088c" />
    <polyline points="150,398 203,435 288,456 440,469 625,463 830,432 938,403 1040,356 1088,312" fill="none" stroke="#04021c" strokeWidth="4" vectorEffect="non-scaling-stroke" />
  </Scene>
);

const Gizmo = () => (
  <Orientation width="496" height="586" viewBox="0 0 496 586" fill="none">
    <g stroke="#7a7a7a" strokeWidth="2">
      <path d="M136 313L173 257L317 254L280 310ZM136 313L153 451L297 449L280 310M317 254L334 393L297 449" fill="#b4b4b4" fillOpacity=".4" />
    </g>
    <path d="M173 257L190 395L334 393M190 395L153 451" stroke="#929292" strokeWidth="1.500" strokeDasharray="9 6" />
    <path d="M184.500 396L168 264" stroke="#90b57e" strokeWidth="3" />
    <path d="M168 264L161 210" stroke="#76b556" strokeWidth="3" />
    <path d="M157.500 183L156.500 212L165 210.500Z" fill="#76b556" />
    <path d="M187 399L334 397.500" stroke="#b07a75" strokeWidth="3" />
    <path d="M334 397.500L384 396.500" stroke="#a3504a" strokeWidth="3" />
    <path d="M380 392L410 396L380 401Z" fill="#a85c56" />
    <path d="M184.500 400L152 450" stroke="#8582b4" strokeWidth="3" />
    <path d="M152 449L134 475" stroke="#5a57b2" strokeWidth="3" />
    <path d="M127 487L129 475Q132 471 137 475Q139 480 127 487Z" fill="#5a57b2" stroke="#5a57b2" />
    <text x="146" y="168" fontSize="40" fill="#6db53c" stroke="#6db53c" strokeWidth=".4" textLength="20" lengthAdjust="spacingAndGlyphs">y</text>
    <text x="424" y="406" fontSize="40" fill="#a03c32" stroke="#a03c32" strokeWidth=".4" textLength="20" lengthAdjust="spacingAndGlyphs">x</text>
    <text x="112" y="507" fontSize="41" fill="#3c36b0" stroke="#3c36b0" strokeWidth=".4" textLength="19" lengthAdjust="spacingAndGlyphs">z</text>
    <text x="192" y="390" fontSize="24" fill="#5c5c5c" textLength="48" lengthAdjust="spacingAndGlyphs">TOP</text>
    <text transform="matrix(1 0 -.55 .5 198 287)" fontSize="17" fill="#555" stroke="#555" strokeWidth=".5" textLength="52" lengthAdjust="spacingAndGlyphs">LEFT</text>
    <text transform="matrix(.45 -.7 .1 1 301 371)" fontSize="17" fill="#555" stroke="#555" strokeWidth=".5" textLength="36" lengthAdjust="spacingAndGlyphs">BACK</text>
    <g stroke="#3d3d3d" strokeWidth="2.500" strokeLinecap="round">
      <path d="M229 169L240 159L251 169M229 537L240 547L251 537M56.500 342L46 353L56.500 364M424 342L434 353L424 364" />
      <rect x="85" y="219" width="21" height="22" rx="5" />
      <path d="M107 227L115 222.500V238L107 234" />
      <path d="M349 229L362.500 218L376 229M352 227V243.500H359.500V234.500H365.500V243.500H373V227" strokeWidth="2" />
    </g>
    <g stroke="#5f5f5f" strokeWidth="2">
      <path d="M110 468A15.500 15.500 0 1 1 96 489M362 468A15.500 15.500 0 1 0 376.500 489" />
    </g>
    <path d="M92 477L100.500 484L90.500 488ZM380 477L371.500 484L382 488Z" fill="#3d3d3d" />
  </Orientation>
);

const StepArrow = ({ left, bar }: { left?: boolean; bar?: boolean }) => (
  <svg width="31" height="22" fill="none" stroke="#8f8f8f" strokeWidth="2.200" transform={left ? undefined : 'scale(-1 1)'}>
    <path d={bar ? 'M1 2V21M6 11.500H30M15 3L6 11.500L15 20' : 'M1 11.500H32M13 1L1.500 11.500L13 22'} />
  </svg>
);

export default function App() {
  return (
    <>
      <Global />
      <Window>
        <Header>
          <Logo />
          <Title>SWCNT 拉伸试验</Title>
          <ShareButton>
            <svg width="34" height="34" viewBox="0 0 34 34" fill="none" stroke="#4f4f4f" strokeWidth="2.500">
              <circle cx="17" cy="17" r="15.500" />
              <ellipse cx="17" cy="17" rx="7.500" ry="15.500" />
              <path d="M3 11.500H31M3 22.500H31" />
            </svg>
            共享
          </ShareButton>
          <HeaderIcons>
            <svg width="27" height="27" viewBox="0 0 27 27" fill="none" stroke="#2c2c2c" strokeWidth="2">
              <rect x="10" y="1" width="16" height="17" rx="3" />
              <path d="M7 9H4Q1 9 1 12V23Q1 26 4 26H14Q17 26 17 22V21" />
            </svg>
            <svg width="26" height="27" viewBox="0 0 26 27" fill="none" stroke="#2c2c2c" strokeWidth="2">
              <path d="M1 25.500L3 18.500L19 2.500Q21.500 .5 24 3Q26 5.500 24 8L8 24ZM3 18.500L8 24M17.500 4L22.500 9.500M6.500 20.500L18 9" />
            </svg>
          </HeaderIcons>
          <UserNav>
            <NavText $gap={50}>论坛</NavText>
            <NavText $gap={17}>帮助</NavText>
            <Chevron w={21} h={12} color="#202020" stroke={3.5} />
            <UserName>h</UserName>
            <Avatar>R</Avatar>
            <Chevron w={25} h={14} color="#202020" stroke={3.5} />
          </UserNav>
        </Header>

        <Toolbar>
          {groups.map((g, i) => (
            <Group key={g.label}>
              {i > 0 && <Separator />}
              <GroupLabel $w={i ? 108 : 129} $pad={i ? 37 : 29}>{g.label}</GroupLabel>
              <Tools>
                {g.tools.map(t => (
                  <ToolItem key={t.text} $w={t.w ?? 100} $active={t.active} $off={t.off}>
                    <Icon>{toolIcons[t.icon]}</Icon>
                    {t.text}
                    {t.badge !== undefined && <Badge $x={t.badge}>试用版</Badge>}
                  </ToolItem>
                ))}
              </Tools>
            </Group>
          ))}
        </Toolbar>

        <Workspace>
          <Cylinder />
          <SideColumn>
            <TreePanel>
              <TreeList>
                <Row $clipped>
                  <TreeCell part="line" />
                  <TreeCell part="line" />
                  <Add />
                </Row>
                {rows.map(r => (
                  <Row key={r.text} $selected={r.selected}>
                    {r.cells.map((p, i) => <TreeCell key={i} part={p} />)}
                    <RowText>{r.text}</RowText>
                    {r.add && <Add />}
                  </Row>
                ))}
              </TreeList>
              <ScrollTrack>
                <ScrollArrow />
                <ScrollThumb />
                <ScrollArrow $down />
              </ScrollTrack>
            </TreePanel>
            <JobPanel>作业状态</JobPanel>
          </SideColumn>
          <Handle $top={716} />

          <FilterPanel>
            <FilterHeader>
              <FilterTitle>过滤 器</FilterTitle>
              <SquareButton $primary>
                <svg width="29" height="20" fill="none" stroke="#b8b8b8" strokeWidth="2.500"><path d="M1 9L10.500 19L28 1" /></svg>
              </SquareButton>
              <SquareButton>
                <svg width="21" height="21" stroke="#3f3f3f" strokeWidth="2.200"><path d="M1 1L20 20M20 1L1 20" /></svg>
              </SquareButton>
            </FilterHeader>
            <FilterRow>
              <Chevron w={11} h={18} dir="right" color="#242424" stroke={2.5} />
              <FilterIcon>
                <svg width="35" height="31" viewBox="0 0 35 31" fill="none" stroke="#3b5f8c" strokeWidth="2">
                  <path d="M1 16L18 1L31 14.500L14 29Z" />
                  <path d="M2 16H30L14 29Z" fill={M} stroke="none" />
                  <path d="M2 16H14V29Z" fill={B} stroke="none" />
                  <path d="M5 2L16 13" /><circle cx="17" cy="13" r="2" fill={B} />
                  <path d="M30 19Q25 26 26.500 28Q30 32 33.500 28Q34.500 25 30 19Z" fill={B} stroke="none" />
                </svg>
              </FilterIcon>
              <FilterName>零件颜色</FilterName>
              <Toggle />
            </FilterRow>
            <FilterRow $active>
              <Chevron w={18} h={11} color="#242424" stroke={2.5} />
              <FilterIcon>
                <Icon size={38}>{toolIcons.shift}</Icon>
              </FilterIcon>
              <FilterName>位移</FilterName>
              <svg width="26" height="30" viewBox="0 0 26 30" fill="none" stroke="#484848" strokeWidth="2">
                <path d="M0 5H26M7 5L9 1H17L19 5M2.500 5V26Q2.500 29 5 29H21Q23.500 29 23.500 26V5M8 10V24M13 10V24M18 10V24" />
              </svg>
              <Toggle />
            </FilterRow>
            <Field $h={119}>
              <FieldName>田</FieldName>
              <Underlined $w={335} $h={80}>位移<Chevron w={20} h={12} stroke={2.5} /></Underlined>
            </Field>
            <Field $h={62}>
              <FieldName>缩放因子</FieldName>
              <Slider />
              <Underlined $w={125} $h={80}>1</Underlined>
            </Field>
          </FilterPanel>

          <Viewport>
            <ViewTools>
              <ViewTool>
                <svg width="40" height="42" viewBox="0 0 40 42" fill="none" stroke="#2e2e2e" strokeWidth="2">
                  <path d="M20 0V5M20 5L36 14V33L20 41L4 33V14ZM4 14L20 23L36 14M20 23V41M4 32L0 34.500M36 32L40 34.500" />
                </svg>
              </ViewTool>
              <ViewTool>
                <svg width="34" height="38" viewBox="0 0 34 38" stroke="#3e3e3e" strokeWidth="1.800">
                  <path d="M17 1L33 10L17 19L1 10Z" fill="#a2a2a2" />
                  <path d="M1 10L17 19V37L1 28Z" fill="#666" />
                  <path d="M33 10L17 19V37L33 28Z" fill="#8d8d8d" />
                </svg>
              </ViewTool>
            </ViewTools>
            <Legend>
              <LegendHead>
                <LegendName>作者：Mises Stress</LegendName>
                <MenuDot><i /><i /><i /></MenuDot>
                <Underlined $w={200} $h={80}>帕<Chevron w={20} h={12} stroke={2.5} /></Underlined>
              </LegendHead>
              <Range><Bound>0</Bound><Bound>0</Bound></Range>
              <ColorBar />
            </Legend>
          </Viewport>

          <Handle $top={189} />
          <RightColumn>
            <InfoPanel $h={184}>
              <InfoTitle $h={89}><Chevron w={24} h={13} stroke={2.5} />网孔</InfoTitle>
              <PartRow>
                <PartElbow />
                <svg width="36" height="41" viewBox="0 0 36 41">
                  <path d="M18 0L36 10L18 20L0 10Z" fill="#a3a3a3" />
                  <path d="M0 10L18 20V41L0 31Z" fill="#656562" />
                  <path d="M36 10L18 20V41L36 31Z" fill="#878888" />
                </svg>
                <PartName>第 1 部分</PartName>
              </PartRow>
            </InfoPanel>
            <InfoPanel $h={223}>
              <InfoTitle $h={91}><Chevron w={24} h={13} stroke={2.5} />步骤</InfoTitle>
              <Steps>
                <StepArrows>
                  <StepArrow left bar />
                  <StepArrow left />
                  <StepArrow />
                  <StepArrow bar />
                </StepArrows>
                <Underlined $w={233} $h={80}>0</Underlined>
              </Steps>
            </InfoPanel>
          </RightColumn>

          <Gizmo />
          <Chat>
            <svg width="120" height="120" viewBox="0 0 120 120" fill="none">
              <path d="M40 30H80Q86.500 30 86.500 36.500V90L71 84H40Q34 84 34 78V36Q34 30 40 30Z" fill="#b2b2b2" />
              <path d="M43 68Q60 80.500 77 68" stroke="#305478" strokeWidth="3.500" strokeLinecap="round" />
            </svg>
          </Chat>
          <Memory>611M</Memory>
          <Translate>
            <svg width="43" height="41" viewBox="0 0 43 41" fill="none">
              <path d="M25 4H31Q37.500 4 37.500 10V15M4 27V32Q4 38 10 38H17" stroke="#d5d5d5" strokeWidth="4" />
              <text x="-1.500" y="21.500" fontFamily="Noto Sans CJK SC" fontWeight="900" fontSize="25" fill="#d5d5d5">中</text>
              <text x="20" y="40" fontFamily="Liberation Sans" fontWeight="700" fontSize="32" fill="#d5d5d5">A</text>
            </svg>
          </Translate>
        </Workspace>
      </Window>
    </>
  );
}
